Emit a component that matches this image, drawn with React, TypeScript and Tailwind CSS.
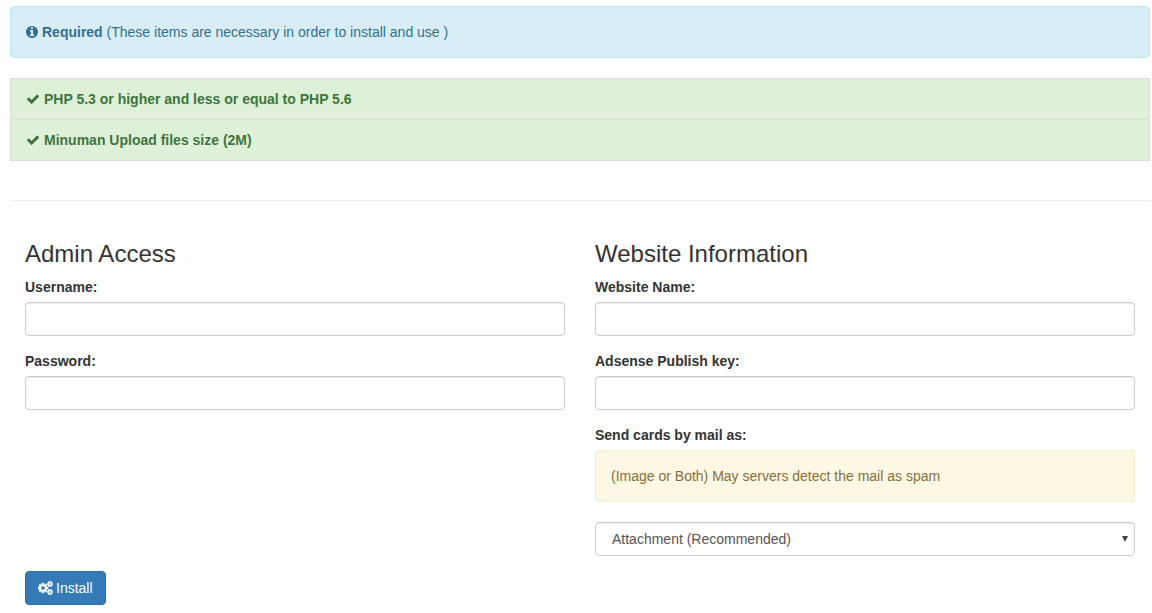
import type { ReactNode } from "react";

const control =
  "block h-[34px] w-full rounded border border-[#cccccc] bg-white px-3 text-sm text-[#555555] shadow-[inset_0_1px_1px_rgba(0,0,0,0.075)] outline-none focus:border-[#66afe9]";

function InfoIcon() {
  return (
    <svg viewBox="128 0 1536 1792" className="mr-1 h-3.5 w-3 shrink-0" fill="currentColor" aria-hidden="true">
      <path d="M1152 1376v-160q0-14-9-23t-23-9h-96v-512q0-14-9-23t-23-9h-320q-14 0-23 9t-9 23v160q0 14 9 23t23 9h96v320h-96q-14 0-23 9t-9 23v160q0 14 9 23t23 9h448q14 0 23-9t9-23zm-128-896v-160q0-14-9-23t-23-9h-192q-14 0-23 9t-9 23v160q0 14 9 23t23 9h192q14 0 23-9t9-23zm640 416q0 209-103 385.5t-279.5 279.5-385.5 103-385.5-103-279.5-279.5-103-385.5 103-385.5 279.5-279.5 385.5-103 385.5 103 279.5 279.5 103 385.5z" />
    </svg>
  );
}

function CheckIcon() {
  return (
    <svg viewBox="0 0 1792 1792" className="mr-1 size-3.5 shrink-0" fill="currentColor" aria-hidden="true">
      <path d="M1671 566q0 40-28 68l-724 724-136 136q-28 28-68 28t-68-28l-136-136-362-362q-28-28-28-68t28-68l136-136q28-28 68-28t68 28l294 295 656-657q28-28 68-28t68 28l136 136q28 28 28 68z" />
    </svg>
  );
}

function CogsIcon() {
  return (
    <svg
      viewBox="0 0 1920 1792"
      className="h-3.5 w-[15px] shrink-0 stroke-current stroke-[60]"
      fill="currentColor"
      aria-hidden="true"
    >
      <path d="M896 896q0-106-75-181t-181-75-181 75-75 181 75 181 181 75 181-75 75-181zm768 512q0-52-38-90t-90-38-90 38-38 90q0 53 37.500 90.500t90.500 37.500 90.500-37.500 37.500-90.500zm0-1024q0-52-38-90t-90-38-90 38-38 90q0 53 37.500 90.500t90.500 37.500 90.500-37.500 37.500-90.500zm-384 421v185q0 10-7 19.500t-16 10.500l-155 24q-11 35-32 76 34 48 90 115 7 11 7 20 0 12-7 19-23 30-82.500 89.500t-78.500 59.500q-11 0-21-7l-115-90q-37 19-77 31-11 108-23 155-7 24-30 24h-186q-11 0-20-7.500t-10-17.500l-23-153q-34-10-75-31l-118 89q-7 7-20 7-11 0-21-8-144-133-144-160 0-9 7-19 10-14 41-53t47-61q-23-44-35-82l-152-24q-10-1-17-9.500t-7-19.500v-185q0-10 7-19.500t16-10.500l155-24q11-35 32-76-34-48-90-115-7-11-7-20 0-12 7-20 22-30 82-89t79-59q11 0 21 7l115 90q34-18 77-32 11-108 23-154 7-24 30-24h186q11 0 20 7.500t10 17.500l23 153q34 10 75 31l118-89q8-7 20-7 11 0 21 8 144 133 144 160 0 8-7 19-12 16-42 54t-45 60q23 48 34 82l152 23q10 2 17 10.500t7 19.500zm640 533v140q0 16-149 31-12 27-30 52 51 113 51 138 0 4-4 7-122 71-124 71-8 0-46-47t-52-68q-20 2-30 2t-30-2q-14 21-52 68t-46 47q-2 0-124-71-4-3-4-7 0-25 51-138-18-25-30-52-149-15-149-31v-140q0-16 149-31 13-29 30-52-51-113-51-138 0-4 4-7 4-2 35-20t59-34 30-16q8 0 46 46.500t52 67.500q20-2 30-2t30 2q51-71 92-112l6-2q4 0 124 70 4 3 4 7 0 25-51 138 17 23 30 52 149 15 149 31zm0-1024v140q0 16-149 31-12 27-30 52 51 113 51 138 0 4-4 7-122 71-124 71-8 0-46-47t-52-68q-20 2-30 2t-30-2q-14 21-52 68t-46 47q-2 0-124-71-4-3-4-7 0-25 51-138-18-25-30-52-149-15-149-31v-140q0-16 149-31 13-29 30-52-51-113-51-138 0-4 4-7 4-2 35-20t59-34 30-16q8 0 46 46.500t52 67.500q20-2 30-2t30 2q51-71 92-112l6-2q4 0 124 70 4 3 4 7 0 25-51 138 17 23 30 52 149 15 149 31z" />
    </svg>
  );
}

function Requirement({ children }: { children: ReactNode }) {
  return (
    <li className="flex items-center border border-[#dddddd] bg-[#dff0d8] px-[15px] py-2.5 font-bold">
      <CheckIcon />
      {children}
    </li>
  );
}

function Field({ id, label, type = "text" }: { id: string; label: string; type?: string }) {
  return (
    <div className="mb-[15px]">
      <label htmlFor={id} className="mb-[5px] block font-bold">
        {label}
      </label>
      <input id={id} type={type} className={control} />
    </div>
  );
}

export default function App() {
  return (
    <main className="bg-white pt-1.5 pr-0.5 pl-2.5 font-['Liberation_Sans',Arial,sans-serif] text-sm leading-5 text-[#333333]">
      <div className="mb-5 flex items-center rounded border border-[#bce8f1] bg-[#d9edf7] p-[15px] text-[#31708f]">
        <InfoIcon />
        <p>
          <strong>Required</strong> (These items are necessary in order to install and use )
        </p>
      </div>

      <ul className="-space-y-px text-[#3c763d]">
        <Requirement>PHP 5.3 or higher and less or equal to PHP 5.6</Requirement>
        <Requirement>Minuman Upload files size (2M)</Requirement>
      </ul>

      <hr className="mt-[39px] mb-10 border-[#eeeeee]" />

      <form onSubmit={(e) => e.preventDefault()} className="px-[15px] pb-2">
        <div className="grid grid-cols-2 gap-[30px]">
          <section>
            <h2 className="mb-2.5 text-2xl leading-[26px]">Admin Access</h2>
            <Field id="username" label="Username:" />
            <Field id="password" label="Password:" type="password" />
          </section>
          <section>
            <h2 className="mb-2.5 text-2xl leading-[26px]">Website Information</h2>
            <Field id="site-name" label="Website Name:" />
            <Field id="adsense" label="Adsense Publish key:" />
            <label htmlFor="send-as" className="mb-[5px] block font-bold">
              Send cards by mail as:
            </label>
            <p className="mb-5 rounded border border-[#faebcc] bg-[#fcf8e3] p-[15px] text-[#8a6d3b]">
              (Image or Both) May servers detect the mail as spam
            </p>
            <div className="relative mb-[15px]">
              <select id="send-as" className={`${control} appearance-none pl-4`}>
                <option>Attachment (Recommended)</option>
                <option>Image</option>
                <option>Both</option>
              </select>
              <svg
                viewBox="0 0 6 6"
                className="pointer-events-none absolute top-3.5 right-[7px] size-1.5 fill-[#444444]"
                aria-hidden="true"
              >
                <path d="M0 0h6L3 6z" />
              </svg>
            </div>
          </section>
        </div>
        <button
          type="submit"
          className="flex h-[34px] items-center gap-[3px] rounded border border-[#2e6da4] bg-[#337ab7] px-3 text-white hover:bg-[#286090]"
        >
          <CogsIcon />
          Install
        </button>
      </form>
    </main>
  );
}
